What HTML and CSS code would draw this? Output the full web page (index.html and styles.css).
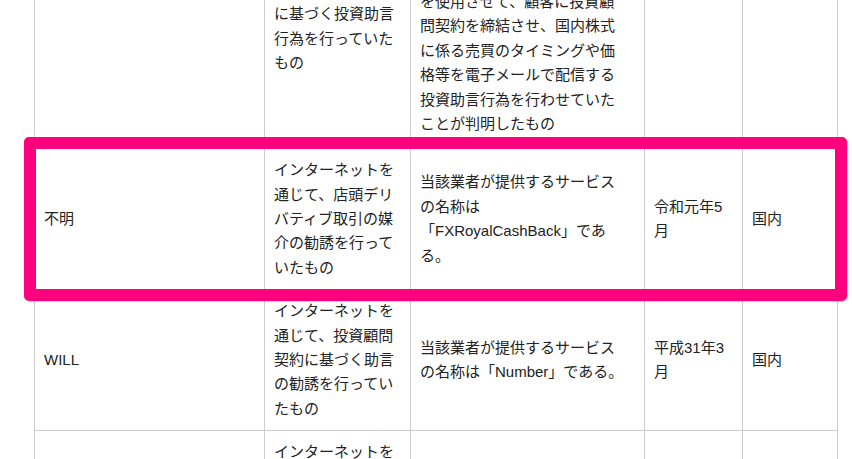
FILE: index.html
```html
<!DOCTYPE html>
<html lang="ja">
<head>
<meta charset="utf-8">
<title>無登録業者一覧</title>
<link rel="stylesheet" href="styles.css">
</head>
<body>
<div class="page">
  <table class="list">
    <colgroup>
      <col class="c-name">
      <col class="c-act">
      <col class="c-note">
      <col class="c-date">
      <col class="c-area">
    </colgroup>
    <tbody>
      <tr class="row-long">
        <td>株式シグナル</td>
        <td>インターネットを通じて、無登録で多数の顧客を勧誘した上で、これら顧客との間で締結した投資顧問契約に基づく投資助言行為を行っていたもの</td>
        <td>当該業者が提供するサービスの名称は「株式シグナル」である。当該業者は、インターネットを通じて不特定多数の者に対して勧誘を行い、当該業者と契約を締結した顧客に対し、自社が開発したとする自動売買ソフト等の各ツールを使用させて、顧客に投資顧問契約を締結させ、国内株式に係る売買のタイミングや価格等を電子メールで配信する投資助言行為を行わせていたことが判明したもの</td>
        <td>令和元年6月</td>
        <td>国内</td>
      </tr>
      <tr>
        <td>不明</td>
        <td>インターネットを通じて、店頭デリバティブ取引の媒介の勧誘を行っていたもの</td>
        <td>当該業者が提供するサービスの名称は「FXRoyalCashBack」である。</td>
        <td>令和元年5月</td>
        <td>国内</td>
      </tr>
      <tr>
        <td>WILL</td>
        <td>インターネットを通じて、投資顧問契約に基づく助言の勧誘を行っていたもの</td>
        <td>当該業者が提供するサービスの名称は「Number」である。</td>
        <td>平成31年3月</td>
        <td>国内</td>
      </tr>
      <tr>
        <td>不明</td>
        <td>インターネットを通じて、投資顧問契約に基づく助言の勧誘を行っていたもの</td>
        <td>当該業者が提供するサービスの名称は「Signal」である。</td>
        <td>平成31年3月</td>
        <td>国内</td>
      </tr>
    </tbody>
  </table>
  <div class="highlight"></div>
</div>
</body>
</html>
```

FILE: styles.css
```css
html, body {
  margin: 0;
  padding: 0;
  background: #ffffff;
}

.page {
  position: relative;
  width: 852px;
  height: 459px;
  overflow: hidden;
  font-family: "Liberation Sans", "Noto Sans CJK JP", sans-serif;
  font-size: 15px;
  line-height: 1.625;
  color: #222222;
  text-spacing-trim: space-all;
}

.list {
  border-collapse: collapse;
  table-layout: fixed;
  width: 803px;
  margin: -212px 0 0 34px;
}

.c-name { width: 230px; }
.c-act  { width: 146px; }
.c-note { width: 234px; }
.c-date { width: 98px; }
.c-area { width: 95px; }

.list td {
  border: 1px solid #cccccc;
  padding: 9px 15px 9px 9px;
  vertical-align: middle;
  text-align: left;
}

.list .row-long td {
  padding-top: 6px;
  padding-bottom: 12px;
}

.highlight {
  position: absolute;
  left: 24px;
  top: 137px;
  width: 823px;
  height: 164px;
  box-sizing: border-box;
  border: 12px solid #ff007f;
  border-radius: 5px;
  box-shadow: 1px 1px 1px rgba(0, 0, 0, 0.18);
}
```
